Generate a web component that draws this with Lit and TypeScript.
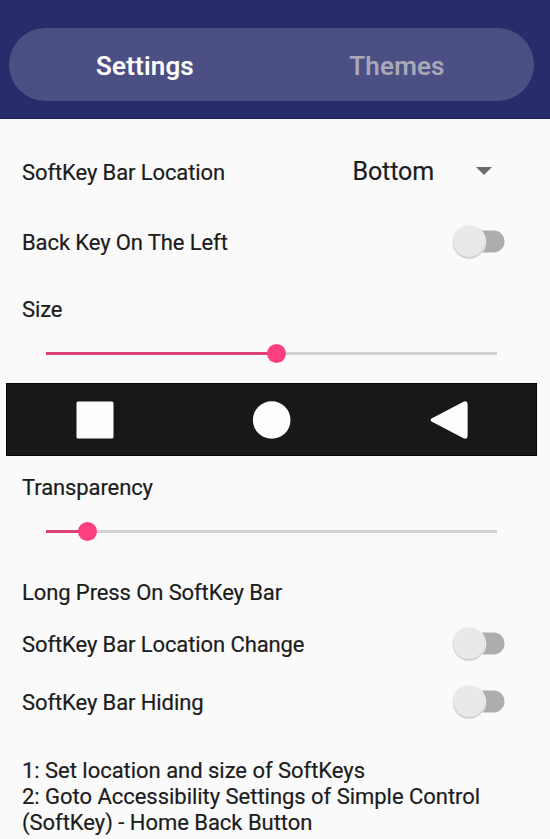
import { LitElement, html, css, svg } from "lit";
import { customElement, property } from "lit/decorators.js";

@customElement("toggle-switch")
class ToggleSwitch extends LitElement {
  static styles = css`
    :host { display: block; width: 56px; height: 40px; }
    svg { display: block; }
    .track { fill: #adadad; }
    .shade { fill: #cfcfcf; }
    .halo { fill: #f1f1f1; }
    .thumb { fill: #e9e9e9; }
  `;
  render() {
    return html`<svg width="56" height="40" viewBox="0 0 56 40">
      <rect class="track" x="9" y="8.5" width="45.5" height="22" rx="11" />
      <circle class="halo" cx="19" cy="20" r="17.2" />
      <circle class="shade" cx="19" cy="20.6" r="16" />
      <circle class="thumb" cx="19" cy="19.4" r="15.6" />
    </svg>`;
  }
}

@customElement("value-slider")
class ValueSlider extends LitElement {
  @property({ type: Number }) value = 0;
  static styles = css`
    :host { display: flex; align-items: center; height: 21px; }
    .filled { height: 3px; background: #dc4079; }
    .thumb { flex: none; width: 19px; height: 19px; margin-left: -9.5px; margin-right: -7.5px; border-radius: 50%; background: #fb3f80; z-index: 1; }
    .rest { flex: 1; height: 3px; background: #d2d2d2; }
  `;
  render() {
    return html`<div class="filled" style="width:${this.value}%"></div>
      <div class="thumb"></div><div class="rest"></div>`;
  }
}

const softKeys = [
  svg`<rect x="1.5" y="1.5" width="37" height="37" rx="1.5" />`,
  svg`<circle cx="20.7" cy="20" r="18.8" />`,
  svg`<path d="M3.5 18.6 L35.5 1.8 Q39.6 .3 39.6 4 V36 Q39.6 39.7 35.5 38.2 L3.5 21.4 Q1.6 20 3.5 18.6Z" />`,
];

@customElement("app-root")
class AppRoot extends LitElement {
  static styles = css`
    :host {
      display: block; height: 839px; overflow: hidden; background: #fafafa;
      color: #1c1c1c; font: 22px/26px Roboto, sans-serif; letter-spacing: -0.1px;
      -webkit-text-stroke: 0.2px currentColor;
    }
    header { box-sizing: border-box; height: 119px; padding: 28px 16px 0 9px; background: #282c6b; border-bottom: 1px solid #1b1d50; }
    .tabs { display: grid; grid-template-columns: 272px 1fr; height: 73px; border-radius: 37px; background: #4c4f83; }
    .tab { display: flex; align-items: center; justify-content: center; padding-top: 2px; font-size: 26px; font-weight: 500; letter-spacing: 0.2px; color: #a9a8b9; }
    .tab.active { color: #fff; }
    .tab.other { padding-right: 21px; }
    main { display: flex; flex-direction: column; padding-top: 18px; }
    .row { display: flex; align-items: center; justify-content: space-between; height: 70px; padding: 0 44px 0 22px; }
    .row > span { padding-top: 2px; }
    .row.compact { height: 58px; }
    .select { display: flex; align-items: center; gap: 42px; padding-right: 14px; font-size: 25px; }
    .caret { width: 0; margin-bottom: 2px; border: 8px solid transparent; border-top-color: #6c6c6c; border-bottom: 0; }
    .label { padding-left: 22px; }
    .size { margin-top: 20px; }
    .slider { margin: 20px 53px 0 46px; }
    .keys { display: grid; grid-template-columns: repeat(3, 1fr); justify-items: center; align-items: center; width: 531px; height: 73px; margin: 19px 0 0 6px; background: #181818; box-sizing: border-box; border: 1px solid #050505; }
    .keys svg { display: block; fill: #fdfdfd; }
    .transparency { margin-top: 19px; }
    .press { margin: 38px 0 9px; }
    .notes { margin: 27px 22px 0; letter-spacing: -0.03px; }
    .line { white-space: nowrap; }
  `;
  render() {
    return html`
      <header>
        <nav class="tabs">
          <div class="tab active"><span>Settings</span></div>
          <div class="tab other"><span>Themes</span></div>
        </nav>
      </header>
      <main>
        <div class="row">
          <span>SoftKey Bar Location</span>
          <div class="select"><span>Bottom</span><i class="caret"></i></div>
        </div>
        <div class="row"><span>Back Key On The Left</span><toggle-switch></toggle-switch></div>
        <div class="label size"><span>Size</span></div>
        <value-slider class="slider" .value=${51.1}></value-slider>
        <div class="keys">
          ${softKeys.map((shape) => html`<svg width="40" height="40" viewBox="0 0 40 40">${shape}</svg>`)}
        </div>
        <div class="label transparency"><span>Transparency</span></div>
        <value-slider class="slider" .value=${9.1}></value-slider>
        <div class="label press"><span>Long Press On SoftKey Bar</span></div>
        <div class="row compact"><span>SoftKey Bar Location Change</span><toggle-switch></toggle-switch></div>
        <div class="row compact"><span>SoftKey Bar Hiding</span><toggle-switch></toggle-switch></div>
        <div class="notes">
          <div class="line">1: Set location and size of SoftKeys</div>
          <div class="line">2: Goto Accessibility Settings of Simple Control</div>
          <div class="line">(SoftKey) - Home Back Button</div>
        </div>
      </main>`;
  }
}
